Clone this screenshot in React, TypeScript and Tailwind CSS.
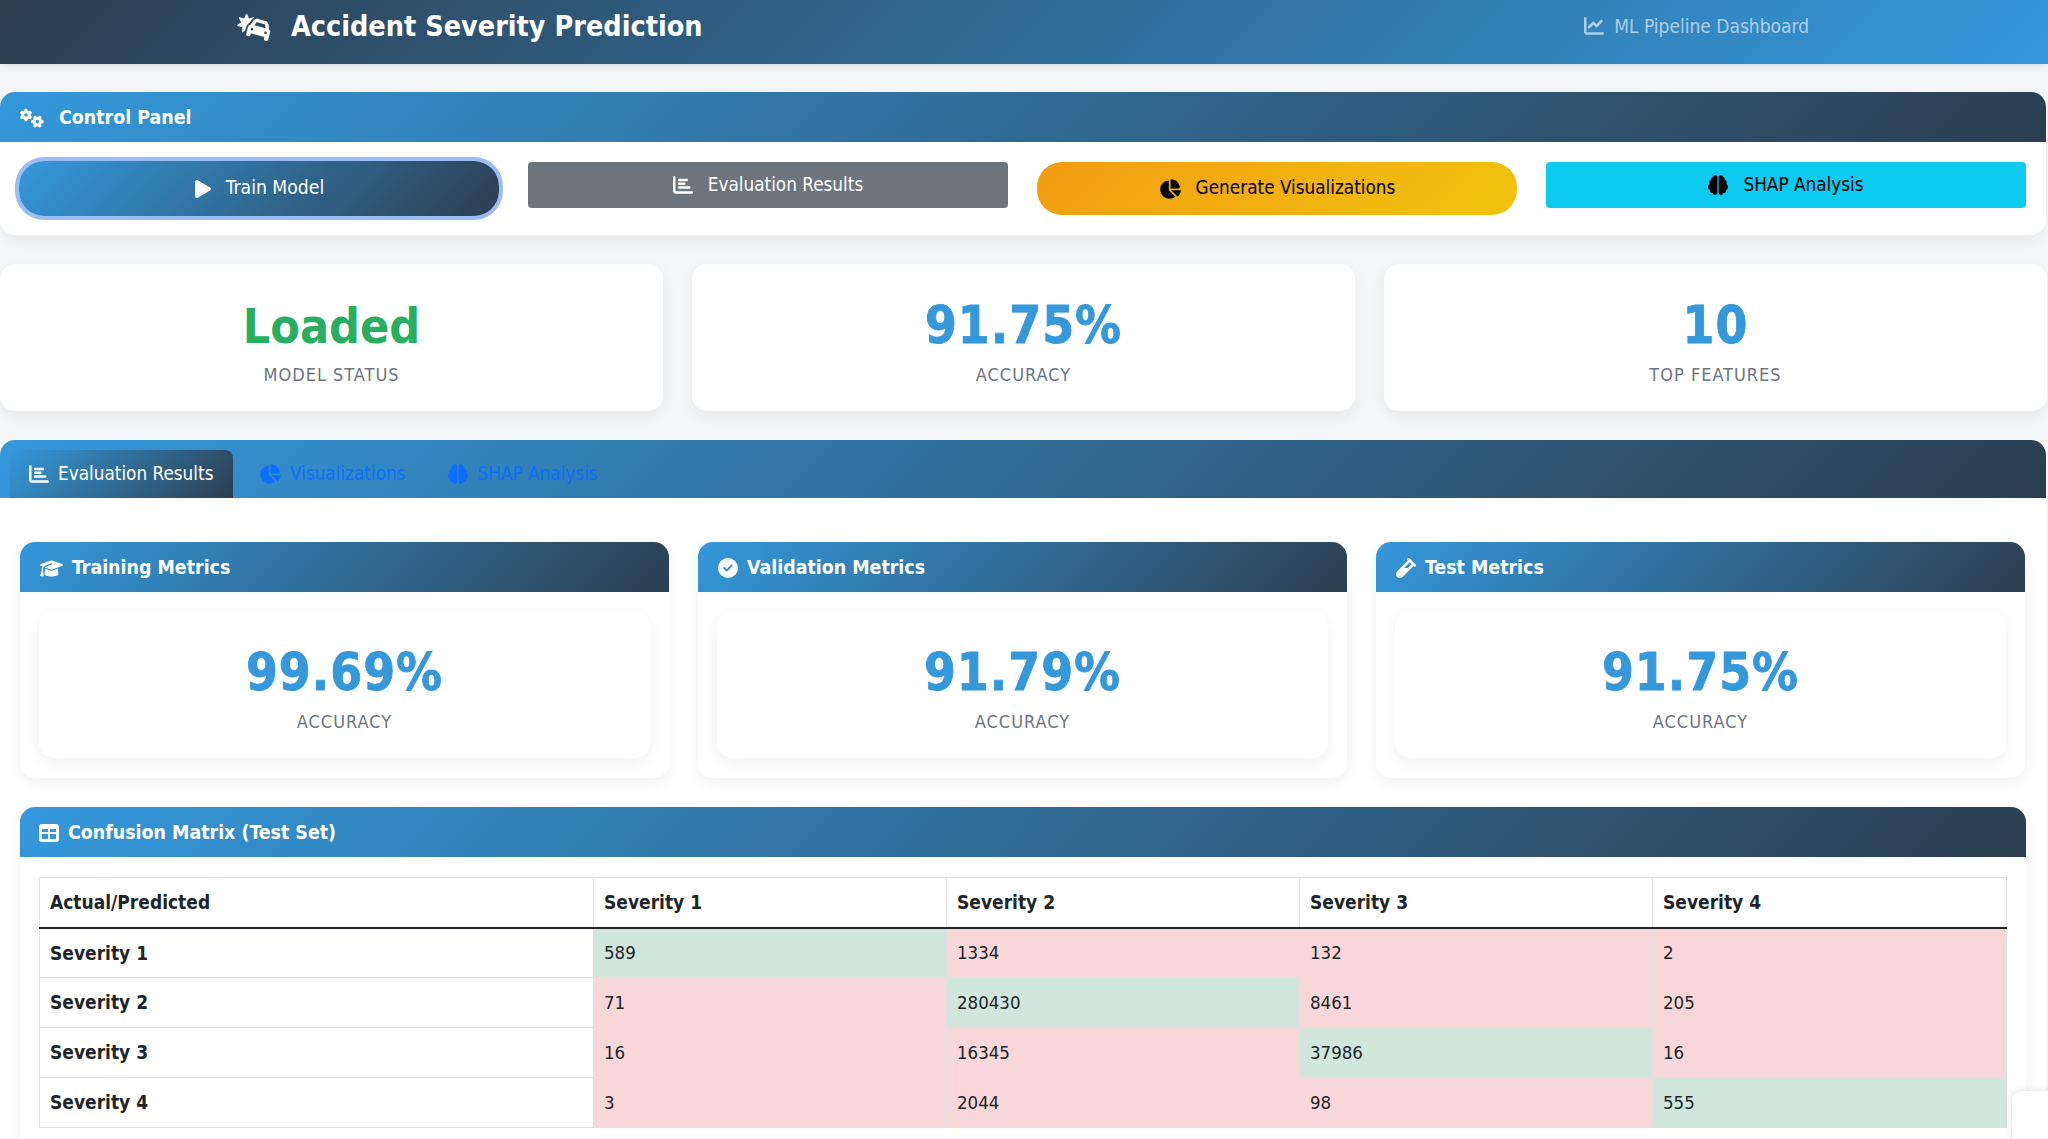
import type { ReactNode } from "react";
import { FaPlay } from "react-icons/fa";
import {
  FaBrain,
  FaCarBurst,
  FaChartBar,
  FaChartLine,
  FaChartPie,
  FaCircleCheck,
  FaGears,
  FaGraduationCap,
  FaVial,
} from "react-icons/fa6";

const HEADERS = ["Actual/Predicted", "Severity 1", "Severity 2", "Severity 3", "Severity 4"];

const MATRIX = [
  [589, 1334, 132, 2],
  [71, 280430, 8461, 205],
  [16, 16345, 37986, 16],
  [3, 2044, 98, 555],
];

function StatCard({ value, label, green }: { value: string; label: string; green?: boolean }) {
  return (
    <div className="h-[147px] rounded-[15px] bg-white flex flex-col items-center shadow-[0_5px_15px_rgba(0,0,0,0.06)]">
      <div
        className={`mt-[33px] leading-[58px] font-bold ${green ? "text-[48px] text-[#27ae60]" : "text-[51px] tracking-[1px] text-[#3498db] [-webkit-text-stroke:0.8px_#3498db]"}`}
      >
        {value}
      </div>
      <div className="mt-[8px] text-[18px] leading-[24px] tracking-[1px] text-[#6c757d] uppercase">{label}</div>
    </div>
  );
}

function MetricCard({ icon, title, value }: { icon: ReactNode; title: string; value: string }) {
  return (
    <div className="h-[236px] rounded-[15px] bg-white shadow-[0_5px_15px_rgba(0,0,0,0.06)]">
      <div className="h-[50px] px-[20px] pt-[2px] flex items-center gap-[9px] rounded-t-[15px] bg-[linear-gradient(135deg,#3498db,#2c3e50)] text-white text-[19.4px] font-bold">
        {icon}
        {title}
      </div>
      <div className="p-[19px]">
        <StatCard value={value} label="Accuracy" />
      </div>
    </div>
  );
}

export default function App() {
  return (
    <div className="relative h-screen overflow-hidden bg-[#f4f6f8] font-['DejaVu_Sans_Condensed','DejaVu_Sans',sans-serif] [font-stretch:condensed] text-[#212529]">
      <nav className="h-[64px] pb-[10px] flex items-center bg-[linear-gradient(135deg,#2c3e50,#3498db)] shadow-[0_2px_8px_rgba(0,0,0,0.1)]">
        <div className="ml-[237px] flex items-center gap-[19px] text-white text-[28.5px] font-bold">
          <FaCarBurst className="text-[35px]" />
          Accident Severity Prediction
        </div>
        <div className="ml-auto mr-[239px] -mt-[2px] flex items-center gap-[10px] text-[19px] text-white/60">
          <FaChartLine className="text-[20px]" />
          ML Pipeline Dashboard
        </div>
      </nav>

      <section className="mt-[28px] w-[2046px] h-[143px] rounded-[15px] bg-white shadow-[0_5px_15px_rgba(0,0,0,0.05)]">
        <div className="h-[50px] px-[20px] pt-[2px] flex items-center gap-[15px] rounded-t-[15px] bg-[linear-gradient(135deg,#3498db,#2c3e50)] text-white text-[19.4px] font-bold">
          <FaGears className="text-[24px]" />
          Control Panel
        </div>
        <div className="mt-[20px] pl-[19px] grid grid-cols-[repeat(4,480px)] gap-x-[29px] items-start text-[18.8px]">
          <button className="h-[55px] -mt-[1px] rounded-[25px] flex items-center justify-center gap-[14px] bg-[linear-gradient(135deg,#3498db,#2c3e50)] text-white text-[19.2px] ring-4 ring-[#9bbdf5]">
            <FaPlay className="text-[18px]" />
            Train Model
          </button>
          <button className="h-[46px] rounded-[4px] flex items-center justify-center gap-[15px] bg-[#6c757d] text-white">
            <FaChartBar className="text-[20px]" />
            Evaluation Results
          </button>
          <button className="h-[53px] rounded-[25px] flex items-center justify-center gap-[15px] bg-[linear-gradient(135deg,#f39c12,#f1c40f)] text-black">
            <FaChartPie className="text-[22px]" />
            Generate Visualizations
          </button>
          <button className="h-[46px] rounded-[4px] flex items-center justify-center gap-[15px] bg-[#0dcaf0] text-black">
            <FaBrain className="text-[20px]" />
            SHAP Analysis
          </button>
        </div>
      </section>

      <section className="mt-[29px] w-[2046px] grid grid-cols-[repeat(3,663px)] gap-x-[29px]">
        <StatCard value="Loaded" label="Model Status" green />
        <StatCard value="91.75%" label="Accuracy" />
        <StatCard value="10" label="Top Features" />
      </section>

      <section className="mt-[29px] w-[2046px] h-[700px] rounded-t-[15px] bg-white">
        <div className="h-[58px] pl-[10px] pt-[10px] flex rounded-t-[15px] bg-[linear-gradient(135deg,#3498db,#2c3e50)] text-[18.8px]">
          <div className="w-[223px] h-[48px] pl-[19px] flex items-center gap-[9px] rounded-t-[8px] bg-[linear-gradient(135deg,#3498db,#2c3e50)] text-white">
            <FaChartBar className="text-[20px]" />
            Evaluation Results
          </div>
          <div className="ml-[26px] h-[48px] flex items-center gap-[9px] text-[#0d6efd]">
            <FaChartPie className="text-[22px]" />
            Visualizations
          </div>
          <div className="ml-[43px] h-[48px] flex items-center gap-[9px] text-[#0d6efd]">
            <FaBrain className="text-[20px]" />
            SHAP Analysis
          </div>
        </div>

        <div className="pt-[44px] pl-[20px] w-[2026px]">
          <div className="grid grid-cols-[repeat(3,649px)] gap-x-[29px]">
            <MetricCard icon={<FaGraduationCap className="text-[23px]" />} title="Training Metrics" value="99.69%" />
            <MetricCard icon={<FaCircleCheck className="text-[20px]" />} title="Validation Metrics" value="91.79%" />
            <MetricCard icon={<FaVial className="text-[20px]" />} title="Test Metrics" value="91.75%" />
          </div>

          <div className="mt-[29px] h-[400px] rounded-t-[15px] bg-white shadow-[0_5px_15px_rgba(0,0,0,0.06)]">
            <div className="h-[50px] pl-[19px] pt-[2px] flex items-center gap-[9px] rounded-t-[15px] bg-[linear-gradient(135deg,#3498db,#2c3e50)] text-white text-[19.4px] font-bold">
              <svg viewBox="0 0 20 18" className="w-[20px] h-[18px]" fill="currentColor">
                <path
                  fillRule="evenodd"
                  d="M3 0h14a3 3 0 0 1 3 3v12a3 3 0 0 1-3 3H3a3 3 0 0 1-3-3V3a3 3 0 0 1 3-3zM3 5v3h6V5zM11 5v3h6V5zM3 10v5h6v-5zM11 10v5h6v-5z"
                />
              </svg>
              Confusion Matrix (Test Set)
            </div>
            <div className="pt-[20px] pl-[19px]">
              <table className="w-[1967px] table-fixed border-collapse border border-[#dee2e6] text-[18.5px]">
                <colgroup>
                  <col className="w-[554px]" />
                  <col className="w-[353px]" />
                  <col className="w-[353px]" />
                  <col className="w-[353px]" />
                  <col className="w-[354px]" />
                </colgroup>
                <thead>
                  <tr className="h-[50px] border-b-2 border-[#212529]">
                    {HEADERS.map((h) => (
                      <th key={h} className="px-[10px] text-left text-[19px] font-bold border-x border-[#dee2e6]">
                        {h}
                      </th>
                    ))}
                  </tr>
                </thead>
                <tbody>
                  {MATRIX.map((row, r) => (
                    <tr key={r} className="h-[50px] border-b border-[#dee2e6]">
                      <td className="px-[10px] text-[19px] font-bold border-x border-[#dee2e6]">Severity {r + 1}</td>
                      {row.map((n, c) => (
                        <td
                          key={c}
                          className={`px-[10px] border-x border-[#dee2e6] ${r === c ? "bg-[#d1e7dd]" : "bg-[#f8d7da]"}`}
                        >
                          {n}
                        </td>
                      ))}
                    </tr>
                  ))}
                </tbody>
              </table>
            </div>
          </div>
        </div>
      </section>

      {/* floating widget clipped by the window corner */}
      <div className="absolute left-[2011px] top-[1090px] w-[60px] h-[60px] rounded-tl-[10px] bg-white border border-[#eceef0] shadow-[0_0_10px_rgba(0,0,0,0.08)]" />
    </div>
  );
}
